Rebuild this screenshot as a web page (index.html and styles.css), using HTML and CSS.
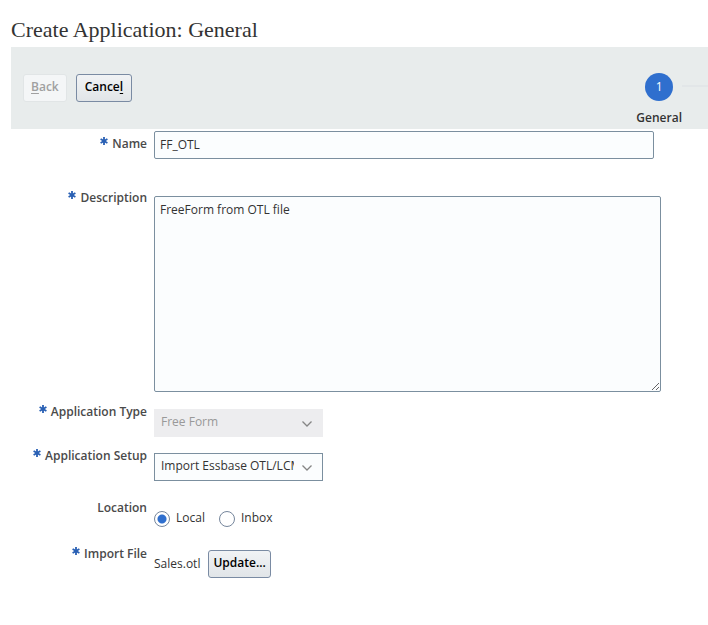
FILE: index.html
```html
<!DOCTYPE html>
<html lang="en">
<head>
<meta charset="utf-8">
<title>Create Application: General</title>
<link rel="stylesheet" href="styles.css">
</head>
<body>
<main class="page">
  <h1 class="title">Create Application: General</h1>
  <header class="toolbar">
    <div class="actions">
      <button class="btn" type="button" disabled><u>B</u>ack</button>
      <button class="btn" type="button">Cance<u>l</u></button>
    </div>
    <div class="train">
      <div class="step">
        <span class="step-number">1</span>
        <span class="step-label">General</span>
      </div>
      <span class="connector"></span>
    </div>
  </header>
  <form class="form">
    <div class="row row-first">
      <label class="label" for="name"><svg class="star" viewBox="0 0 8 8"><path d="M4 0V8M.6 2L7.4 6M7.4 2L.6 6"/></svg>Name</label>
      <div class="control"><input class="field name" id="name" type="text" value="FF_OTL"></div>
    </div>
    <div class="row row-description">
      <label class="label" for="description"><svg class="star" viewBox="0 0 8 8"><path d="M4 0V8M.6 2L7.4 6M7.4 2L.6 6"/></svg>Description</label>
      <div class="control"><textarea class="field description" id="description">FreeForm from OTL file</textarea></div>
    </div>
    <div class="row row-type">
      <label class="label" for="type"><svg class="star" viewBox="0 0 8 8"><path d="M4 0V8M.6 2L7.4 6M7.4 2L.6 6"/></svg>Application Type</label>
      <div class="control"><div class="select">
        <select class="field" id="type" disabled><option>Free Form</option></select>
        <svg class="chevron" viewBox="0 0 12 8"><path d="M1.5 1.5L6 6L10.5 1.5"/></svg>
      </div></div>
    </div>
    <div class="row row-setup">
      <label class="label" for="setup"><svg class="star" viewBox="0 0 8 8"><path d="M4 0V8M.6 2L7.4 6M7.4 2L.6 6"/></svg>Application Setup</label>
      <div class="control"><div class="select">
        <select class="field" id="setup"><option>Import Essbase OTL/LCM</option></select>
        <svg class="chevron" viewBox="0 0 12 8"><path d="M1.5 1.5L6 6L10.5 1.5"/></svg>
      </div></div>
    </div>
    <div class="row row-location" role="radiogroup" aria-labelledby="location">
      <span class="label" id="location">Location</span>
      <div class="control radios">
        <label class="radio"><input type="radio" name="location" checked><span>Local</span></label>
        <label class="radio"><input type="radio" name="location"><span>Inbox</span></label>
      </div>
    </div>
    <div class="row row-file">
      <label class="label" for="update"><svg class="star" viewBox="0 0 8 8"><path d="M4 0V8M.6 2L7.4 6M7.4 2L.6 6"/></svg>Import File</label>
      <div class="control file">
        <span class="file-name">Sales.otl</span>
        <button class="btn btn-update" id="update" type="button">Update...</button>
      </div>
    </div>
  </form>
</main>
</body>
</html>
```
FILE: styles.css
```css
* {
  box-sizing: border-box;
}

body {
  margin: 0;
  background: #fff;
  color: #333;
  font: 12px/18px "Open Sans", "Noto Sans", sans-serif;
}

.page {
  padding: 16px 0 24px 11px;
}

.title {
  margin: 0 0 3px;
  font: 400 22px/28px Georgia, "Liberation Serif", serif;
}

.toolbar {
  display: flex;
  justify-content: space-between;
  align-items: flex-start;
  height: 82px;
  padding: 26px 0 0 12px;
  background: #e8ecec;
}

.actions {
  display: flex;
  gap: 9px;
  padding-top: 1px;
}

.btn {
  height: 28px;
  padding: 0 8px 2px;
  border: 1px solid #7a8ba3;
  border-radius: 3px;
  background: linear-gradient(#f1f3f5, #e1e5e8);
  color: #000;
  font: inherit;
  font-weight: 600;
}

.btn:disabled {
  padding: 0 7px 2px;
  border-color: #e1e5e6;
  background: #f4f6f7;
  color: #a0a0a0;
}

.btn u {
  text-underline-offset: 2px;
}

.train {
  display: flex;
  align-items: flex-start;
}

.step {
  display: flex;
  flex-direction: column;
  align-items: center;
  gap: 8px;
}

.step-number {
  width: 28px;
  height: 28px;
  border-radius: 50%;
  background: #2f6fce;
  color: #fff;
  line-height: 27px;
  text-align: center;
}

.step-label {
  font-weight: 600;
}

.connector {
  width: 26px;
  height: 2px;
  margin-top: 12px;
  background: #e2e6e8;
}

.form {
  padding-top: 2px;
}

.row {
  display: grid;
  grid-template-columns: 136px minmax(0, 1fr);
  column-gap: 7px;
  align-items: start;
}

.row-description {
  margin-top: 26px;
}

.row-type {
  margin-top: 7px;
}

.row-setup {
  margin-top: 6px;
}

.row-location {
  margin-top: 14px;
}

.row-file {
  margin-top: 14px;
}

.label {
  display: flex;
  justify-content: flex-end;
  gap: 4px;
  padding-top: 4px;
  color: #4a4a4a;
  font-weight: 600;
  white-space: nowrap;
}

.star {
  width: 8px;
  height: 8px;
  margin-top: 2px;
  fill: none;
  stroke: #2960b4;
  stroke-width: 1.8;
}

.control {
  padding-top: 10px;
}

.row-first .control {
  padding-top: 0;
}

.field {
  display: block;
  width: 100%;
  height: 28px;
  margin: 0;
  padding: 0 5px 1px;
  border: 1px solid #7b8f9f;
  border-radius: 2px;
  background: #fbfdfe;
  color: #333;
  font: inherit;
}

.name {
  max-width: 500px;
}

.description {
  max-width: 507px;
  height: 196px;
  margin-top: 1px;
  padding: 4px 5px;
}

.select {
  position: relative;
  max-width: 169px;
}

.select .field {
  appearance: none;
  padding: 0 28px 2px 6px;
  border-radius: 0;
}

.select .field:disabled {
  border-color: #ededef;
  background: #ededef;
  color: #999;
  opacity: 1;
}

.chevron {
  position: absolute;
  top: 11px;
  right: 10px;
  width: 12px;
  height: 8px;
  fill: none;
  stroke: #858585;
  stroke-width: 1.3;
  pointer-events: none;
}

.radios {
  display: flex;
  gap: 14px;
  padding-top: 14px;
}

.radio {
  display: flex;
  align-items: flex-start;
  gap: 6px;
}

.radio input {
  appearance: none;
  width: 16px;
  height: 16px;
  margin: 2px 0 0;
  border: 1px solid #76869c;
  border-radius: 50%;
  background: #fff;
}

.radio input:checked {
  background: radial-gradient(circle, #2f6fce 4px, #fff 5px);
}

.file {
  display: flex;
  align-items: center;
  gap: 8px;
  padding-top: 9px;
}

.btn-update {
  padding: 0 4px 2px;
}
```
